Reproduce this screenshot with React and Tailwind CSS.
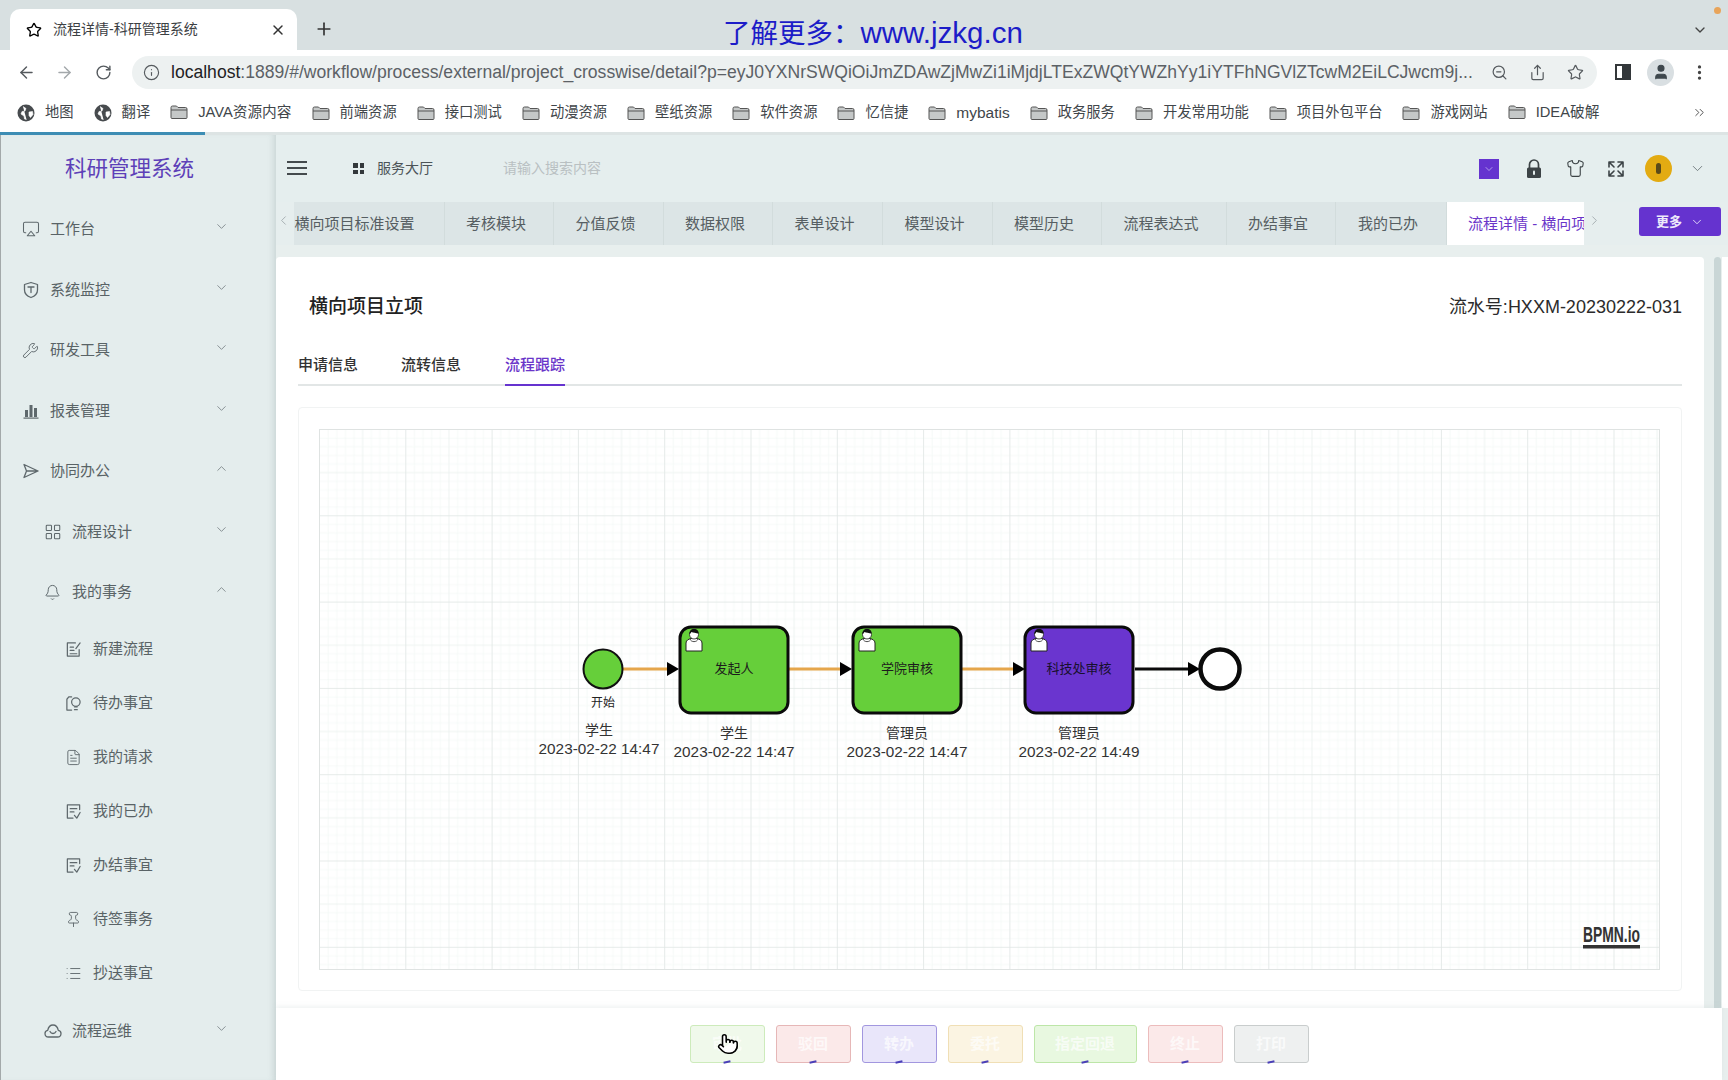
import React from "react";
import {
  Airplay, ArrowLeft, ArrowRight, Bell, ChevronDown, ChevronLeft, ChevronRight, ChevronUp,
  ChevronsRight, EllipsisVertical, FileText, Info, LayoutGrid, List, Pin, Plus,
  Pointer, RotateCw, Share, Shirt, Star, User, Wrench, X, ZoomOut,
} from "lucide-react";

const bookmarks = [
  { label: "地图", globe: true },
  { label: "翻译", globe: true },
  { label: "JAVA资源内容", cls: "text-[14.700px]" },
  { label: "前端资源" },
  { label: "接口测试" },
  { label: "动漫资源" },
  { label: "壁纸资源" },
  { label: "软件资源" },
  { label: "忆信捷" },
  { label: "mybatis", cls: "text-[15.500px]" },
  { label: "政务服务" },
  { label: "开发常用功能" },
  { label: "项目外包平台" },
  { label: "游戏网站" },
  { label: "IDEA破解", cls: "text-[14.700px]" },
];

const pageTabs = [
  { label: "横向项目标准设置", w: "w-[174px]" },
  { label: "考核模块", w: "w-[109px]" },
  { label: "分值反馈", w: "w-[110px]" },
  { label: "数据权限", w: "w-[109px]" },
  { label: "表单设计", w: "w-[110px]" },
  { label: "模型设计", w: "w-[110px]" },
  { label: "模型历史", w: "w-[109px]" },
  { label: "流程表达式", w: "w-[125px]" },
  { label: "办结事宜", w: "w-[109px]" },
  { label: "我的已办", w: "w-[111px]" },
];

const actions = [
  { label: "审批", cls: "bg-[#f0f9eb] border-[#cdebbb]" },
  { label: "驳回", cls: "bg-[#fbe9e9] border-[#e6b7b7]" },
  { label: "转办", cls: "bg-[#e9e6fa] border-[#a297df]" },
  { label: "委托", cls: "bg-[#fbf4e2] border-[#f0dfb5]" },
  { label: "指定回退", cls: "bg-[#e8f8e0] border-[#bde6a8] w-[103px]" },
  { label: "终止", cls: "bg-[#fbe9e9] border-[#ecbcbc]" },
  { label: "打印", cls: "bg-[#eef0f0] border-[#c9cdcd]" },
];

const Svg = ({ size = 18, children }) => (
  <svg width={size} height={size} viewBox="0 0 18 18" fill="none" stroke="currentColor" strokeWidth="1.3" strokeLinecap="round" strokeLinejoin="round">
    {children}
  </svg>
);

const ShieldT = () => (
  <Svg>
    <path d="M9 1.500l6.500 2v5.500c0 3.800-2.800 6.200-6.500 7.500C5.300 15.200 2.500 12.800 2.500 9V3.500z" />
    <path d="M6 6h6M9 6v5.500" />
  </Svg>
);
const Bars = () => (
  <svg width="18" height="18" viewBox="0 0 18 18" fill="currentColor">
    <rect x="3" y="8" width="3" height="7" />
    <rect x="7.500" y="3" width="3" height="12" />
    <rect x="12" y="6" width="3" height="9" />
    <rect x="1.500" y="15.500" width="15" height="1.200" />
  </svg>
);
const Plane = () => (
  <Svg>
    <path d="M2 2.500l14 6.500-14 6.500 2.500-6.500zM4.500 9H16" />
  </Svg>
);
const FileEditIcon = () => (
  <Svg size={17}>
    <path d="M11 2H2.500v14h12.500v-7" />
    <path d="M16 2l-4.500 6M5.500 6.500H9M5.500 10h4M5.500 13.500h7" />
  </Svg>
);
const BulbFile = () => (
  <Svg size={17}>
    <path d="M7 2H4L2 4.500V16h5" />
    <circle cx="11.500" cy="7.500" r="4.500" />
    <path d="M10 15.500h3M10 12.500h3" />
  </Svg>
);
const DoneFile = () => (
  <Svg size={17}>
    <path d="M15.500 7V2h-13v14h6" />
    <path d="M5.500 6h7M5.500 9.500h4M10 13l2.500 3L16 10" />
  </Svg>
);
const CloudSmile = () => (
  <Svg>
    <path d="M4.500 15C2.300 15 1 13.300 1 11.500c0-1.800 1.300-3 2.700-3.200C4.300 5.500 6.400 3 9 3s4.700 2.500 5.300 5.300c1.400.2 2.700 1.400 2.700 3.200 0 1.800-1.300 3.500-3.500 3.500z" />
    <path d="M6 9.500c.7 1.500 1.700 2 3 2s2.300-.5 3-2" />
  </Svg>
);
const Corners = () => (
  <Svg>
    <path d="M2 7V2h5M2 2l5 5M16 7V2h-5M16 2l-5 5M2 11v5h5M2 16l5-5M16 11v5h-5M16 16l-5-5" strokeWidth="1.6" />
  </Svg>
);
const Padlock = () => (
  <svg width="18" height="20" viewBox="0 0 18 20">
    <path d="M4.500 9V5.500a4.500 4.500 0 019 0V9" fill="none" stroke="#3c4346" strokeWidth="1.700" />
    <rect x="2" y="8.500" width="14" height="10.500" rx="1.500" fill="#3c4346" />
    <rect x="8" y="11.500" width="2" height="4.500" rx="1" fill="#e5eeee" />
  </svg>
);
const Folder = () => (
  <svg width="18" height="16" viewBox="0 0 18 16">
    <path d="M1 3.500A1.500 1.500 0 012.500 2h4l1.500 1.500h7.500A1.500 1.500 0 0117 5v8.500a1 1 0 01-1 1H2a1 1 0 01-1-1z" fill="#c5c8c8" stroke="#555" strokeWidth="1" />
    <path d="M1 6h16" stroke="#555" strokeWidth="1" />
  </svg>
);
const GlobeDot = () => (
  <svg width="18" height="18" viewBox="0 0 18 18">
    <circle cx="9" cy="9" r="8.500" fill="#474b4e" />
    <path d="M6 2.500l3 2-1 2.500-3 .5-1 2.500 3 2 .5 3 2 .5M12 8l3.500-.5.5 3-2.500 3-1.500-2z" fill="#fff" stroke="#fff" strokeWidth=".6" />
  </svg>
);

function SideRow({ icon, label, level = 0, open, arrow = true }) {
  const rowCls = level === 0 ? "h-[60.5px] pl-[21px]" : level === 1 ? "h-[60.5px] pl-[43px]" : "h-[54px] pl-[64px]";
  return (
    <div className={`flex items-center text-[15px] text-[#596366] pr-[47px] ${rowCls}`}>
      <span className="flex w-[28px] shrink-0 items-center text-[#5e686c]">{icon}</span>
      <span className="flex-1">{label}</span>
      {arrow && (open
        ? <ChevronUp size={15} strokeWidth={1.3} className="-mt-[5px] text-[#737d80]" />
        : <ChevronDown size={15} strokeWidth={1.3} className="-mt-[5px] text-[#737d80]" />)}
    </div>
  );
}

function Sidebar() {
  return (
    <aside className="w-[276px] shrink-0 border-l border-[#a3a9aa] bg-[#e4eded] shadow-[inset_-6px_0_6px_-4px_rgba(120,140,140,0.25)]">
      <div className="flex h-[64px] items-center pl-[64px] pt-[4px] text-[21.5px] text-[#5d40b8]">科研管理系统</div>
      <SideRow icon={<Airplay size={18} strokeWidth={1.4} />} label="工作台" />
      <SideRow icon={<ShieldT />} label="系统监控" />
      <SideRow icon={<Wrench size={17} strokeWidth={1.3} />} label="研发工具" />
      <SideRow icon={<Bars />} label="报表管理" />
      <SideRow icon={<Plane />} label="协同办公" open />
      <SideRow level={1} icon={<LayoutGrid size={18} strokeWidth={1.4} />} label="流程设计" />
      <SideRow level={1} icon={<Bell size={17} strokeWidth={1.4} />} label="我的事务" open />
      <SideRow level={2} arrow={false} icon={<FileEditIcon />} label="新建流程" />
      <SideRow level={2} arrow={false} icon={<BulbFile />} label="待办事宜" />
      <SideRow level={2} arrow={false} icon={<FileText size={17} strokeWidth={1.3} />} label="我的请求" />
      <SideRow level={2} arrow={false} icon={<DoneFile />} label="我的已办" />
      <SideRow level={2} arrow={false} icon={<DoneFile />} label="办结事宜" />
      <SideRow level={2} arrow={false} icon={<Pin size={17} strokeWidth={1.3} />} label="待签事务" />
      <SideRow level={2} arrow={false} icon={<List size={17} strokeWidth={1.3} />} label="抄送事宜" />
      <SideRow level={1} icon={<CloudSmile />} label="流程运维" />
    </aside>
  );
}

function Person({ x, y }) {
  return (
    <g transform={`translate(${x} ${y})`}>
      <path d="M1 22v-8c0-3 3-4 5-4.500h6c2 .5 5 1.500 5 4.500v8z" fill="#fff" stroke="#222" strokeWidth="1" />
      <path d="M5 10c1 3.500 7 3.500 8 0" fill="none" stroke="#222" strokeWidth=".8" />
      <circle cx="9" cy="5.500" r="4.500" fill="#fff" stroke="#222" strokeWidth=".8" />
      <path d="M4.500 5.500C4 2 6 0 9 0s5 2 4.500 4.500C11 4 8 3.500 6.500 3z" fill="#111" />
    </g>
  );
}

function Task({ x, fill, label, who, time, textFill }) {
  return (
    <g>
      <rect x={x} y="197" width="108" height="86" rx="11" fill={fill} stroke="#0b0b0b" strokeWidth="3" />
      <Person x={x + 5} y="199" />
      <text x={x + 54} y="243" textAnchor="middle" fontSize="13" fill={textFill}>{label}</text>
      <text x={x + 54} y="308" textAnchor="middle" fontSize="14" fill="#333">{who}</text>
      <text x={x + 54} y="327" textAnchor="middle" fontSize="15.3" fill="#333">{time}</text>
    </g>
  );
}

function Flow({ x1, x2, color }) {
  return (
    <g>
      <line x1={x1} y1="239" x2={x2 - 8} y2="239" stroke={color} strokeWidth="3" />
      <path d={`M${x2 - 12} 232l12 7-12 7z`} fill="#000" />
    </g>
  );
}

function Diagram() {
  return (
    <svg width="1341" height="541" viewBox="0 0 1341 541" className="block">
      <defs>
        <pattern id="minor" width="8.63" height="8.63" patternUnits="userSpaceOnUse">
          <path d="M8.630 0H0V8.630" fill="none" stroke="#eef5f2" strokeWidth="1" />
        </pattern>
        <pattern id="mid" width="43.15" height="43.15" patternUnits="userSpaceOnUse">
          <rect width="43.15" height="43.15" fill="url(#minor)" />
          <path d="M43.150 0H0V43.150" fill="none" stroke="#e6ecea" strokeWidth="1" />
        </pattern>
        <pattern id="major" width="86.3" height="86.3" patternUnits="userSpaceOnUse">
          <rect width="86.3" height="86.3" fill="url(#mid)" />
          <path d="M86.300 0H0V86.300" fill="none" stroke="#dde2e1" strokeWidth="1" />
        </pattern>
      </defs>
      <rect x=".5" y=".5" width="1340" height="540" fill="url(#major)" stroke="#dfe3e2" />

      <g transform="translate(1 1)">
        <Flow x1={302} x2={359} color="#e5a64b" />
        <Flow x1={469} x2={532} color="#e5a64b" />
        <Flow x1={642} x2={705} color="#e5a64b" />
        <Flow x1={815} x2={880} color="#0b0b0b" />

        <circle cx="283" cy="239" r="19.500" fill="#66cf3a" stroke="#111" strokeWidth="2" />
        <text x="283" y="277" textAnchor="middle" fontSize="12" fill="#222">开始</text>
        <text x="279" y="305" textAnchor="middle" fontSize="14" fill="#333">学生</text>
        <text x="279" y="324" textAnchor="middle" fontSize="15.3" fill="#333">2023-02-22 14:47</text>

        <Task x={360} fill="#66cf3a" label="发起人" who="学生" time="2023-02-22 14:47" textFill="#1c1c1c" />
        <Task x={533} fill="#66cf3a" label="学院审核" who="管理员" time="2023-02-22 14:47" textFill="#1c1c1c" />
        <Task x={705} fill="#6a35cf" label="科技处审核" who="管理员" time="2023-02-22 14:49" textFill="#17102e" />

        <circle cx="900" cy="239" r="19.500" fill="#fff" stroke="#0b0b0b" strokeWidth="4.500" />

        <text x="1263" y="512" fontSize="22" fontWeight="700" fill="#333" textLength="57" lengthAdjust="spacingAndGlyphs">BPMN.io</text>
        <rect x="1263" y="515" width="57" height="3.500" fill="#333" />
      </g>
    </svg>
  );
}

export default function App() {
  return (
    <div className="relative flex h-[1080px] w-[1728px] flex-col overflow-hidden bg-white font-['Liberation_Sans','Noto_Sans_CJK_SC',sans-serif]">
      {/* Browser tabs */}
      <div className="flex h-[50px] shrink-0 items-end bg-[#d8e0e1] pl-[10px]">
        <div className="flex h-[41px] w-[287px] items-center rounded-t-[10px] bg-white pl-[16px] pr-[11px] text-[14px] text-[#3c4043]">
          <Star size={16} strokeWidth={2} className="text-black" />
          <span className="ml-[11px] flex-1">流程详情-科研管理系统</span>
          <X size={16} strokeWidth={2.2} className="text-[#333]" />
        </div>
        <Plus size={20} strokeWidth={2} className="mb-[11px] ml-[17px] text-[#333]" />
        <div className="flex-1" />
        <ChevronDown size={16} strokeWidth={2} className="mb-[12px] mr-[20px] text-[#444]" />
      </div>
      <span className="absolute left-[1714px] top-[7px] h-[7px] w-[7px] rounded-full bg-[#e8a45a]" />
      <div className="absolute left-[723px] top-[13px] flex items-baseline leading-[40px] text-[#1c1cc8]">
        <span className="text-[27.500px]">了解更多：</span>
        <span className="text-[29.500px]">www.jzkg.cn</span>
      </div>

      {/* Toolbar */}
      <div className="flex h-[40px] shrink-0 items-center bg-white pl-[7px] pt-[4px] text-[#555a5e]">
        <span className="flex w-[38px] justify-center"><ArrowLeft size={19} strokeWidth={1.8} /></span>
        <span className="flex w-[39px] justify-center text-[#a3a8ab]"><ArrowRight size={19} strokeWidth={1.8} /></span>
        <span className="flex w-[38px] justify-center"><RotateCw size={17} strokeWidth={2} /></span>
        <div className="ml-[10px] flex h-[33px] w-[1465px] items-center rounded-full bg-[#edf1f1] pl-[11px]">
          <Info size={17} strokeWidth={1.6} />
          <span className="ml-[11px] w-[1302px] truncate text-[17.570px]">
            <span className="text-[#1f2124]">localhost</span>
            <span className="text-[#5c6166]">:1889/#/workflow/process/external/project_crosswise/detail?p=eyJ0YXNrSWQiOiJmZDAwZjMwZi1iMjdjLTExZWQtYWZhYy1iYTFhNGVlZTcwM2EiLCJwcm9j...</span>
          </span>
          <span className="ml-[7px] flex w-[38px] justify-center"><ZoomOut size={17} strokeWidth={1.7} /></span>
          <span className="flex w-[38px] justify-center"><Share size={17} strokeWidth={1.7} /></span>
          <span className="flex w-[38px] justify-center"><Star size={17} strokeWidth={1.7} /></span>
        </div>
        <span className="ml-[18px] flex h-[16px] w-[16px] border-2 border-[#33373a] bg-white">
          <span className="ml-auto h-full w-[7px] bg-[#33373a]" />
        </span>
        <span className="ml-[16px] flex h-[27px] w-[27px] items-center justify-center rounded-full bg-[#d9dfe2] text-[#3e474d]">
          <User size={18} fill="currentColor" strokeWidth={1.5} />
        </span>
        <EllipsisVertical size={19} strokeWidth={2.2} className="ml-[16px] text-[#444]" />
      </div>

      {/* Bookmarks */}
      <div className="flex h-[42px] shrink-0 items-center gap-[20px] bg-white pl-[17px] pt-[3px] text-[14.300px] text-[#41464a]">
        {bookmarks.map((item) => (
          <div key={item.label} className="flex items-center gap-[10px]">
            {item.globe ? <GlobeDot /> : <Folder />}
            <span className={item.cls}>{item.label}</span>
          </div>
        ))}
        <ChevronsRight size={15} strokeWidth={1.6} className="absolute left-[1692px] top-[105px] text-[#555]" />
      </div>
      <div className="flex h-[3px] shrink-0 bg-[#dde4e4]">
        <div className="h-full w-[205px] bg-[#3d8db4]" />
      </div>

      <div className="flex min-h-0 flex-1">
        <Sidebar />

        <main className="flex min-w-0 flex-1 flex-col bg-[#e8efee]">
          {/* Header */}
          <div className="flex h-[67px] shrink-0 items-center bg-[#e5eeee] pl-[11px] pr-[22px]">
            <div className="-mt-[2px] flex h-[14px] w-[20px] flex-col justify-between">
              <span className="h-[2px] bg-[#444a4d]" />
              <span className="h-[2px] bg-[#444a4d]" />
              <span className="h-[2px] bg-[#444a4d]" />
            </div>
            <div className="ml-[46px] grid h-[11px] w-[11px] grid-cols-2 gap-[2px]">
              <span className="bg-[#33383b]" />
              <span className="bg-[#33383b]" />
              <span className="bg-[#33383b]" />
              <span className="bg-[#33383b]" />
            </div>
            <span className="ml-[13px] text-[14px] text-[#4c5458]">服务大厅</span>
            <span className="ml-[70px] text-[14px] text-[#b9c0c2]">请输入搜索内容</span>
            <div className="flex-1" />
            <span className="flex h-[20px] w-[20px] items-center justify-center bg-[#6533cf] text-[#c9bdf2]">
              <ChevronDown size={12} strokeWidth={1.5} />
            </span>
            <span className="ml-[26px] flex"><Padlock /></span>
            <span className="ml-[23px] flex text-[#3c4346]"><Shirt size={19} strokeWidth={1.4} /></span>
            <span className="ml-[22px] flex text-[#3c4346]"><Corners /></span>
            <span className="ml-[20px] flex h-[27px] w-[27px] items-center justify-center rounded-full bg-[#e3ab12]">
              <span className="h-[11px] w-[5px] rounded-full bg-[#5a4a1a]" />
            </span>
            <ChevronDown size={17} strokeWidth={1.2} className="ml-[17px] text-[#667074]" />
          </div>

          {/* Open pages */}
          <div className="flex h-[43px] shrink-0 items-center bg-[#e6eeee]">
            <span className="flex h-full w-[18px] items-center justify-start text-[#9aa3a6]">
              <ChevronLeft size={15} strokeWidth={1.3} className="-mt-[6px]" />
            </span>
            <div className="flex h-full w-[1290px] overflow-hidden">
              <div className="-ml-[23px] flex h-full">
                {pageTabs.map((tab) => (
                  <span key={tab.label} className={`flex h-full shrink-0 items-center justify-center border-r border-[#d2dcdc] bg-[#dce5e6] pr-[6px] pt-[2px] text-[15px] text-[#565e62] ${tab.w}`}>
                    {tab.label}
                  </span>
                ))}
                <span className="flex h-full w-[160px] shrink-0 items-center whitespace-nowrap bg-white pl-[21px] pt-[2px] text-[15px] text-[#6a35c9]">流程详情 - 横向项目立项</span>
              </div>
            </div>
            <span className="flex h-full w-[18px] items-center justify-end text-[#9aa3a6]">
              <ChevronRight size={15} strokeWidth={1.3} className="-mt-[6px]" />
            </span>
            <button className="-mt-[4px] ml-[37px] flex h-[29px] w-[82px] items-center justify-center gap-[8px] rounded-[3px] bg-[#6533cf] text-[13px] font-bold text-[#eee9fb]">
              更多
              <ChevronDown size={14} strokeWidth={1.5} />
            </button>
          </div>

          {/* Page body */}
          <div className="mt-[12px] flex min-h-0 flex-1 overflow-hidden">
            <section className="w-[1428px] shrink-0 rounded-t-[4px] bg-white px-[22px]">
              <div className="mt-[36px] flex h-[28px] items-center justify-between">
                <h1 className="pl-[11px] text-[19px] font-medium text-[#222]">横向项目立项</h1>
                <span className="text-[18px] text-[#2b2b2b]">流水号:HXXM-20230222-031</span>
              </div>
              <div className="mt-[24px] flex h-[41px] border-b-2 border-[#e2e6e6] text-[15px] font-medium text-[#333]">
                <span className="h-[41px] leading-[40px]">申请信息</span>
                <span className="ml-[43px] h-[41px] leading-[40px]">流转信息</span>
                <span className="ml-[44px] h-[41px] border-b-2 border-[#6533cf] leading-[40px] text-[#6a35c9]">流程跟踪</span>
              </div>
              <div className="mt-[21px] rounded-[4px] border border-[#f1f3f3] pb-[20px] pl-[20px] pr-[21px] pt-[21px]">
                <Diagram />
              </div>
            </section>
            <div className="ml-[10px] w-[7px] shrink-0 rounded-t-full bg-[#c9d6d6]" />
            <div className="ml-[1px] flex-1 bg-white" />
          </div>

          {/* Actions */}
          <footer className="relative mr-[6px] flex h-[72px] shrink-0 items-center justify-center gap-[11px] bg-white shadow-[0_-2px_4px_rgba(200,210,210,0.25)]">
            {actions.map((action) => (
              <button key={action.label} className={`relative flex h-[38px] w-[75px] items-center justify-center rounded-[3px] border text-[15px] font-bold text-white/70 ${action.cls}`}>
                {action.label}
                <span className="absolute -bottom-[1px] left-1/2 h-[2px] w-[7px] -translate-x-1/2 -rotate-12 bg-[#4a3fb8]" />
              </button>
            ))}
            <Pointer size={22} strokeWidth={1.7} fill="#fff" className="absolute left-[441px] top-[25px] text-black" />
          </footer>
        </main>
      </div>
    </div>
  );
}
